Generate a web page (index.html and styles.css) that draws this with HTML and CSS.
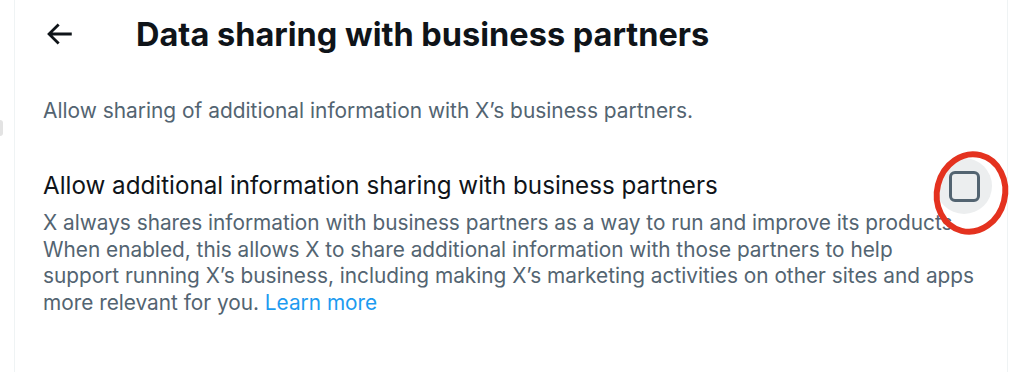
FILE: index.html
```html
<!DOCTYPE html>
<html lang="en">
<head>
<meta charset="utf-8">
<title>Data sharing with business partners</title>
<link rel="stylesheet" href="styles.css">
</head>
<body>
<div class="page">
  <span class="edge-blob"></span>
  <main class="col">
    <header class="top">
      <button class="back" aria-label="Back">
        <svg viewBox="0 0 24 24" width="34" height="34"><path d="M7.414 13l5.043 5.04-1.414 1.42L3.586 12l7.457-7.46 1.414 1.42L7.414 11H21v2H7.414z"/></svg>
      </button>
      <h1 class="title">Data sharing with business partners</h1>
    </header>
    <p class="intro">Allow sharing of additional information with X’s business partners.</p>
    <section class="setting">
      <div class="row">
        <span class="label">Allow additional information sharing with business partners</span>
        <span class="check"><span class="box"></span></span>
      </div>
      <p class="desc">X always shares information with business partners as a way to run and improve its products.<br>When enabled, this allows X to share additional information with those partners to help<br>support running X’s business, including making X’s marketing activities on other sites and apps<br>more relevant for you. <a class="link" href="#">Learn more</a></p>
    </section>
  </main>
  <svg class="annot" width="100" height="110" viewBox="0 0 100 110"><ellipse cx="50" cy="55" rx="34" ry="39" transform="rotate(14 50 55)"/></svg>
</div>
</body>
</html>
```
FILE: styles.css
```css
* { box-sizing: border-box; }
html, body { margin: 0; padding: 0; background: #fff; }
body {
  font-family: Inter, "Noto Sans", "Liberation Sans", sans-serif;
  color: #0f1419;
  width: 1024px;
  height: 372px;
  overflow: hidden;
}
.page { position: relative; height: 372px; }
.col {
  margin-left: 14px;
  width: 994px;
  height: 372px;
  border-left: 1px solid #eff3f4;
  border-right: 1px solid #eff3f4;
}
.top {
  height: 68px;
  display: flex;
  align-items: center;
  padding-left: 27px;
}
.back {
  width: 34px;
  height: 34px;
  padding: 0;
  border: 0;
  background: none;
  display: flex;
  margin-right: 60px;
}
.back svg { fill: #0f1419; }
.title {
  margin: 0;
  font-size: 32.5px;
  font-weight: 700;
  letter-spacing: 0;
}
.intro {
  margin: 29px 0 0;
  padding: 0 28px;
  font-size: 20.9px;
  line-height: 27px;
  color: #536471;
}
.setting { padding: 47px 28px 0; }
.row {
  display: flex;
  align-items: center;
  justify-content: space-between;
  height: 30px;
}
.label {
  font-size: 24.2px;
  line-height: 30px;
  color: #0f1419;
}
.check {
  width: 56px;
  height: 56px;
  margin: -13px -13px -13px 0;
  border-radius: 50%;
  background: #eceeef;
  display: flex;
  align-items: center;
  justify-content: center;
  position: relative;
  z-index: 1;
}
.box {
  width: 31px;
  height: 31px;
  border: 3px solid #536471;
  border-radius: 6px;
}
.desc {
  margin: 9px 0 0;
  font-size: 20.8px;
  line-height: 26.7px;
  color: #536471;
  white-space: nowrap;
}
.link { color: #1d9bf0; text-decoration: none; }
.edge-blob {
  position: absolute;
  left: 0;
  top: 120px;
  width: 3px;
  height: 16px;
  background: #e3e3e3;
  border-radius: 0 3px 3px 0;
}
.annot {
  position: absolute;
  left: 921px;
  top: 138px;
  z-index: 2;
}
.annot ellipse { fill: none; stroke: #e4321f; stroke-width: 6; }
```
